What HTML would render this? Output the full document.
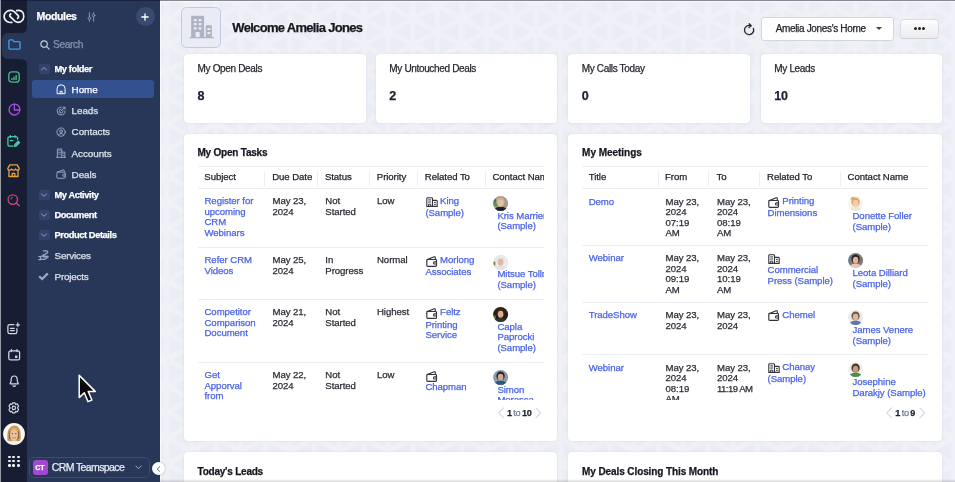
<!DOCTYPE html>
<html><head><meta charset="utf-8"><title>Zoho CRM Home</title>
<style>
*{box-sizing:border-box;margin:0;padding:0}
html,body{width:955px;height:482px;overflow:hidden}
body{font-family:"Liberation Sans",sans-serif;font-size:11px;color:#222;background:#f0f1f7;position:relative}
#railbg{position:absolute;left:0;top:0;width:27px;height:482px;background:#171e34}
#rail{position:absolute;left:0;top:0;width:27px;height:482px;will-change:transform}
#edge{position:absolute;left:0;top:0;width:1px;height:482px;background:#989aa6}
#sidebg{position:absolute;left:27px;top:0;width:133px;height:482px;background:#283757}
#side{position:absolute;left:27px;top:0;width:133px;height:482px;will-change:transform}
#main{position:absolute;left:0;top:0;width:955px;height:482px;overflow:hidden;will-change:transform}
.t{position:absolute;white-space:nowrap;line-height:1;-webkit-text-stroke:0.25px currentColor}
.card{position:absolute;background:#fff;border-radius:4px;box-shadow:0 0 2px rgba(190,195,222,.55)}
.hr{position:absolute;height:1px;background:#eceef5}
.vr{position:absolute;width:1px;background:#edeff6}
.av{position:absolute;width:15px;height:15px;border-radius:50%;overflow:hidden}
svg{position:absolute;overflow:visible}
</style></head><body>
<div id="main">
<svg style="left:161px;top:1px" width="794" height="481"><defs><pattern id="tri" x="276.4" y="4.7" width="49.2" height="26.2" patternUnits="userSpaceOnUse"><rect width="49.2" height="26.2" fill="#ebedf5"/><g stroke="#f0f1f7" stroke-width="5.4" fill="none"><path d="M0 0V26.2M24.6 0V26.2M49.2 0V26.2M0 0L49.2 26.2M0 26.2L49.2 0M0 -26.2L49.2 0M0 26.2L49.2 52.4M0 0L49.2 -26.2M0 52.4L49.2 26.2"/></g></pattern></defs><rect width="794" height="481" fill="url(#tri)"/></svg>
<div style="position:absolute;left:160px;top:0;width:795px;height:1px;background:#86888f"></div><div style="position:absolute;left:160px;top:1px;width:795px;height:1px;background:#f7f8fb"></div>
<div style="position:absolute;left:160px;top:1px;width:1.3px;height:481px;background:#f9fafc"></div>
<div style="position:absolute;left:180.7px;top:6.8px;width:40.8px;height:40.8px;background:#e9ecf4;border:1px solid #c1c8e8;border-radius:5.5px"></div>
<svg style="left:175px;top:2px" width="60" height="50.05" viewBox="0 0 578 482"><g fill="#adb4c2" fill-rule="evenodd">
<path d="M156 140Q156 133 163 133H273Q280 133 280 140V338H238V290H198V338H156Z M182 164V186H208V164Z M228 164V186H254V164Z M182 203V225H208V203Z M228 203V225H254V203Z M182 242V264H208V242Z M228 242V264H254V242Z"/>
<path d="M296 232Q296 225 303 225H348Q355 225 355 232V338H296Z M312 250V270H340V250Z M312 288V308H340V288Z"/>
<rect x="140" y="336" width="236" height="14" rx="4"/></g></svg>
<div class="t" style="left:232.3px;top:21px;font-size:13px;color:#15171f;font-weight:bold;letter-spacing:-0.69px;">Welcome Amelia Jones</div>
<svg style="left:743.2px;top:22.6px" width="12" height="12.6" viewBox="0 0 12 12.6" fill="none" stroke="#23252c" stroke-width="1.3" stroke-linecap="round" stroke-linejoin="round"><path d="M7.4 2.6A4.6 4.6 0 1 0 10.4 5.4"/><path d="M6.2 0.8L8.2 2.7L6 4.5"/></svg>
<div style="position:absolute;left:761px;top:17.2px;width:132.5px;height:23.4px;background:#fff;border:1px solid #d3d6e2;border-radius:3px"></div>
<div class="t" style="left:775.7px;top:24px;font-size:10px;color:#23252c;letter-spacing:-0.34px;">Amelia Jones's Home</div>
<div style="position:absolute;left:875.6px;top:26.9px;width:0;height:0;border-left:3.1px solid transparent;border-right:3.1px solid transparent;border-top:3px solid #444"></div>
<div style="position:absolute;left:900.2px;top:18.5px;width:38.6px;height:20px;background:linear-gradient(#fdfdfe,#eceaef);border:1px solid #d9dbea;border-bottom-color:#cfcfd8;border-radius:4px"></div>
<div style="position:absolute;left:914.1px;top:27.4px;width:3px;height:3px;border-radius:50%;background:#222"></div>
<div style="position:absolute;left:918.15px;top:27.4px;width:3px;height:3px;border-radius:50%;background:#222"></div>
<div style="position:absolute;left:922.2px;top:27.4px;width:3px;height:3px;border-radius:50%;background:#222"></div>
<div class="card" style="left:184.3px;top:54px;width:181.4px;height:68.7px"></div>
<div class="t" style="left:197.6px;top:64px;font-size:10px;color:#26282f;letter-spacing:-0.34px;">My Open Deals</div>
<div class="t" style="left:197.6px;top:90px;font-size:12.5px;color:#1b1f33;font-weight:bold;letter-spacing:-0.2px;">8</div>
<div class="card" style="left:376px;top:54px;width:181.4px;height:68.7px"></div>
<div class="t" style="left:389.3px;top:64px;font-size:10px;color:#26282f;letter-spacing:-0.34px;">My Untouched Deals</div>
<div class="t" style="left:389.3px;top:90px;font-size:12.5px;color:#1b1f33;font-weight:bold;letter-spacing:-0.2px;">2</div>
<div class="card" style="left:568.4px;top:54px;width:181.4px;height:68.7px"></div>
<div class="t" style="left:581.7px;top:64px;font-size:10px;color:#26282f;letter-spacing:-0.34px;">My Calls Today</div>
<div class="t" style="left:581.7px;top:90px;font-size:12.5px;color:#1b1f33;font-weight:bold;letter-spacing:-0.2px;">0</div>
<div class="card" style="left:761px;top:54px;width:181.4px;height:68.7px"></div>
<div class="t" style="left:774.3px;top:64px;font-size:10px;color:#26282f;letter-spacing:-0.34px;">My Leads</div>
<div class="t" style="left:774.3px;top:90px;font-size:12.5px;color:#1b1f33;font-weight:bold;letter-spacing:-0.2px;">10</div>
<div class="card" style="left:184.3px;top:134px;width:373.2px;height:307px"></div>
<div class="card" style="left:568.4px;top:134px;width:373.2px;height:307px"></div>
<div class="card" style="left:184.3px;top:451.5px;width:373.2px;height:60px"></div>
<div class="card" style="left:568.4px;top:451.5px;width:373.2px;height:60px"></div>
<div class="t" style="left:197.5px;top:148px;font-size:10px;color:#15171f;font-weight:bold;letter-spacing:-0.22px;">My Open Tasks</div>
<div class="t" style="left:582.1px;top:148px;font-size:10px;color:#15171f;font-weight:bold;letter-spacing:-0.03px;">My Meetings</div>
<div class="t" style="left:197.5px;top:467px;font-size:10px;color:#15171f;font-weight:bold;letter-spacing:-0.22px;">Today's Leads</div>
<div class="t" style="left:582.1px;top:467px;font-size:10px;color:#15171f;font-weight:bold;letter-spacing:-0.1px;">My Deals Closing This Month</div>
<div style="position:absolute;left:160px;top:479px;width:795px;height:3px;background:linear-gradient(rgba(0,0,0,0),rgba(0,0,0,.16));z-index:5"></div>
<div style="position:absolute;left:197.5px;top:160px;width:346.5px;height:240.3px;overflow:hidden"><div style="position:absolute;left:-197.5px;top:-160px;width:955px;height:482px">
<div class="hr" style="left:197.5px;top:166.1px;width:347px"></div><div class="hr" style="left:197.5px;top:188.1px;width:347px"></div>
<div class="vr" style="left:264.3px;top:170.5px;height:15px"></div>
<div class="vr" style="left:317.2px;top:170.5px;height:15px"></div>
<div class="vr" style="left:369.3px;top:170.5px;height:15px"></div>
<div class="vr" style="left:417.1px;top:170.5px;height:15px"></div>
<div class="vr" style="left:485.1px;top:170.5px;height:15px"></div>
<div class="t" style="left:204.3px;top:172px;font-size:9.6px;color:#23252c;letter-spacing:-0.06px;">Subject</div>
<div class="t" style="left:272.2px;top:172px;font-size:9.6px;color:#23252c;letter-spacing:-0.06px;">Due Date</div>
<div class="t" style="left:324.9px;top:172px;font-size:9.6px;color:#23252c;letter-spacing:-0.06px;">Status</div>
<div class="t" style="left:376.8px;top:172px;font-size:9.6px;color:#23252c;letter-spacing:-0.06px;">Priority</div>
<div class="t" style="left:424.8px;top:172px;font-size:9.6px;color:#23252c;letter-spacing:-0.06px;">Related To</div>
<div class="t" style="left:492.4px;top:172px;font-size:9.6px;color:#23252c;letter-spacing:-0.06px;">Contact Name</div>
<div class="hr" style="left:197.5px;top:246.9px;width:347px"></div>
<div class="hr" style="left:197.5px;top:299.1px;width:347px"></div>
<div class="hr" style="left:197.5px;top:362.0px;width:347px"></div>
<div class="t" style="left:204.5px;top:196px;font-size:9.6px;color:#4a63e6;letter-spacing:-0.06px;">Register for</div>
<div class="t" style="left:204.5px;top:207px;font-size:9.6px;color:#4a63e6;letter-spacing:-0.06px;">upcoming</div>
<div class="t" style="left:204.5px;top:217px;font-size:9.6px;color:#4a63e6;letter-spacing:-0.06px;">CRM</div>
<div class="t" style="left:204.5px;top:228px;font-size:9.6px;color:#4a63e6;letter-spacing:-0.06px;">Webinars</div>
<div class="t" style="left:272.5px;top:196px;font-size:9.6px;color:#2b2d35;letter-spacing:-0.06px;">May 23,</div>
<div class="t" style="left:272.5px;top:207px;font-size:9.6px;color:#2b2d35;letter-spacing:-0.06px;">2024</div>
<div class="t" style="left:325.3px;top:196px;font-size:9.6px;color:#2b2d35;letter-spacing:-0.06px;">Not</div>
<div class="t" style="left:325.3px;top:207px;font-size:9.6px;color:#2b2d35;letter-spacing:-0.06px;">Started</div>
<div class="t" style="left:377.0px;top:196px;font-size:9.6px;color:#2b2d35;letter-spacing:-0.06px;">Low</div>
<svg style="left:425.7px;top:197.0px" width="12" height="10" viewBox="0 0 12 10" fill="none" stroke="#33353d" stroke-width="1.1" stroke-linejoin="round"><path d="M0.8 9.4V1.6Q0.8 0.7 1.7 0.7H5.6Q6.5 0.7 6.5 1.6V9.4Z"/><path d="M6.5 3.4H10.3Q11.2 3.4 11.2 4.3V9.4H6.5"/><path d="M2.2 2.9H5.1M2.2 5H5.1M8 5.4H9.8M8 7.4H9.8" stroke-width="1"/><path d="M2.6 9.4V7.2H4.7V9.4" stroke-width="1"/></svg>
<div class="t" style="left:440.1px;top:196px;font-size:9.6px;color:#4a63e6;letter-spacing:-0.06px;">King</div>
<div class="t" style="left:425.4px;top:208px;font-size:9.6px;color:#4a63e6;letter-spacing:-0.06px;">(Sample)</div>
<svg style="left:492.8px;top:195.8px" width="15.2" height="15.2" viewBox="0 0 16 16"><defs><clipPath id="c492_195"><circle cx="8" cy="8" r="7.9"/></clipPath><filter id="fc492_195" x="-20%" y="-20%" width="140%" height="140%"><feGaussianBlur stdDeviation="0.55"/></filter></defs><g clip-path="url(#c492_195)"><g filter="url(#fc492_195)"><rect x="-2" y="-2" width="20" height="20" fill="#a89a84"/><rect x="0" y="5" width="4.5" height="6" fill="#5f9445"/><rect x="0" y="3" width="3" height="3" fill="#3b5fa8"/><ellipse cx="8" cy="6.4" rx="4.4" ry="4.9" fill="#c9b59c"/><path d="M0.5 17Q1.5 11.4 8 11.4Q14.5 11.4 15.5 17Z" fill="#1c2336"/><ellipse cx="8" cy="7.6" rx="2.9" ry="3.6" fill="#e6bfa8"/></g></g></svg>
<div class="t" style="left:497.4px;top:211px;font-size:9.6px;color:#4a63e6;letter-spacing:-0.06px;">Kris Marrien</div>
<div class="t" style="left:497.4px;top:221px;font-size:9.6px;color:#4a63e6;letter-spacing:-0.06px;">(Sample)</div>
<div class="t" style="left:204.5px;top:255px;font-size:9.6px;color:#4a63e6;letter-spacing:-0.06px;">Refer CRM</div>
<div class="t" style="left:204.5px;top:266px;font-size:9.6px;color:#4a63e6;letter-spacing:-0.06px;">Videos</div>
<div class="t" style="left:272.5px;top:255px;font-size:9.6px;color:#2b2d35;letter-spacing:-0.06px;">May 25,</div>
<div class="t" style="left:272.5px;top:266px;font-size:9.6px;color:#2b2d35;letter-spacing:-0.06px;">2024</div>
<div class="t" style="left:325.3px;top:255px;font-size:9.6px;color:#2b2d35;letter-spacing:-0.06px;">In</div>
<div class="t" style="left:325.3px;top:266px;font-size:9.6px;color:#2b2d35;letter-spacing:-0.06px;">Progress</div>
<div class="t" style="left:377.0px;top:255px;font-size:9.6px;color:#2b2d35;letter-spacing:-0.06px;">Normal</div>
<svg style="left:425.9px;top:255.6px" width="12" height="11" viewBox="0 0 12 11" fill="none" stroke="#33353d" stroke-width="1.15" stroke-linejoin="round" stroke-linecap="round"><path d="M0.8 4.4Q0.8 3.5 1.7 3.5H9.6Q10.5 3.5 10.5 4.4V9.4Q10.5 10.3 9.6 10.3H1.7Q0.8 10.3 0.8 9.4Z"/><path d="M1.2 3.6L8.2 0.8Q9.2 0.5 9.3 1.5V3.4"/><path d="M10.5 5.8H8.4Q7.5 5.8 7.5 6.9Q7.5 8 8.4 8H10.5"/></svg>
<div class="t" style="left:440.1px;top:255px;font-size:9.6px;color:#4a63e6;letter-spacing:-0.06px;">Morlong</div>
<div class="t" style="left:425.4px;top:267px;font-size:9.6px;color:#4a63e6;letter-spacing:-0.06px;">Associates</div>
<svg style="left:492.8px;top:254.6px" width="15.2" height="15.2" viewBox="0 0 16 16"><defs><clipPath id="c492_254"><circle cx="8" cy="8" r="7.9"/></clipPath><filter id="fc492_254" x="-20%" y="-20%" width="140%" height="140%"><feGaussianBlur stdDeviation="0.55"/></filter></defs><g clip-path="url(#c492_254)"><g filter="url(#fc492_254)"><rect x="-2" y="-2" width="20" height="20" fill="#eceeee"/><circle cx="8" cy="8" r="7.6" fill="none" stroke="#d8dbe2" stroke-width="0.8"/><rect x="0.5" y="7" width="2" height="4" fill="#6f8a4a"/><ellipse cx="8" cy="6.4" rx="4.4" ry="4.9" fill="#e6e3de"/><path d="M0.5 17Q1.5 11.4 8 11.4Q14.5 11.4 15.5 17Z" fill="#dfe3e6"/><ellipse cx="8" cy="7.6" rx="2.9" ry="3.6" fill="#e3b89c"/></g></g></svg>
<div class="t" style="left:497.4px;top:269px;font-size:9.6px;color:#4a63e6;letter-spacing:-0.06px;">Mitsue Tollner</div>
<div class="t" style="left:497.4px;top:280px;font-size:9.6px;color:#4a63e6;letter-spacing:-0.06px;">(Sample)</div>
<div class="t" style="left:204.5px;top:307px;font-size:9.6px;color:#4a63e6;letter-spacing:-0.06px;">Competitor</div>
<div class="t" style="left:204.5px;top:318px;font-size:9.6px;color:#4a63e6;letter-spacing:-0.06px;">Comparison</div>
<div class="t" style="left:204.5px;top:328px;font-size:9.6px;color:#4a63e6;letter-spacing:-0.06px;">Document</div>
<div class="t" style="left:272.5px;top:307px;font-size:9.6px;color:#2b2d35;letter-spacing:-0.06px;">May 21,</div>
<div class="t" style="left:272.5px;top:318px;font-size:9.6px;color:#2b2d35;letter-spacing:-0.06px;">2024</div>
<div class="t" style="left:325.3px;top:307px;font-size:9.6px;color:#2b2d35;letter-spacing:-0.06px;">Not</div>
<div class="t" style="left:325.3px;top:318px;font-size:9.6px;color:#2b2d35;letter-spacing:-0.06px;">Started</div>
<div class="t" style="left:377.0px;top:307px;font-size:9.6px;color:#2b2d35;letter-spacing:-0.06px;">Highest</div>
<svg style="left:425.9px;top:307.8px" width="12" height="11" viewBox="0 0 12 11" fill="none" stroke="#33353d" stroke-width="1.15" stroke-linejoin="round" stroke-linecap="round"><path d="M0.8 4.4Q0.8 3.5 1.7 3.5H9.6Q10.5 3.5 10.5 4.4V9.4Q10.5 10.3 9.6 10.3H1.7Q0.8 10.3 0.8 9.4Z"/><path d="M1.2 3.6L8.2 0.8Q9.2 0.5 9.3 1.5V3.4"/><path d="M10.5 5.8H8.4Q7.5 5.8 7.5 6.9Q7.5 8 8.4 8H10.5"/></svg>
<div class="t" style="left:440.1px;top:307px;font-size:9.6px;color:#4a63e6;letter-spacing:-0.06px;">Feltz</div>
<div class="t" style="left:425.4px;top:320px;font-size:9.6px;color:#4a63e6;letter-spacing:-0.06px;">Printing</div>
<div class="t" style="left:425.4px;top:330px;font-size:9.6px;color:#4a63e6;letter-spacing:-0.06px;">Service</div>
<svg style="left:492.8px;top:306.8px" width="15.2" height="15.2" viewBox="0 0 16 16"><defs><clipPath id="c492_306"><circle cx="8" cy="8" r="7.9"/></clipPath><filter id="fc492_306" x="-20%" y="-20%" width="140%" height="140%"><feGaussianBlur stdDeviation="0.55"/></filter></defs><g clip-path="url(#c492_306)"><g filter="url(#fc492_306)"><rect x="-2" y="-2" width="20" height="20" fill="#2b1e18"/><rect x="0" y="9" width="3" height="4" fill="#4a7a3a"/><ellipse cx="8" cy="6.4" rx="4.4" ry="4.9" fill="#3a2519"/><path d="M0.5 17Q1.5 11.4 8 11.4Q14.5 11.4 15.5 17Z" fill="#33302b"/><ellipse cx="8" cy="7.6" rx="2.9" ry="3.6" fill="#dcae92"/></g></g></svg>
<div class="t" style="left:497.4px;top:322px;font-size:9.6px;color:#4a63e6;letter-spacing:-0.06px;">Capla</div>
<div class="t" style="left:497.4px;top:332px;font-size:9.6px;color:#4a63e6;letter-spacing:-0.06px;">Paprocki</div>
<div class="t" style="left:497.4px;top:343px;font-size:9.6px;color:#4a63e6;letter-spacing:-0.06px;">(Sample)</div>
<div class="t" style="left:204.5px;top:370px;font-size:9.6px;color:#4a63e6;letter-spacing:-0.06px;">Get</div>
<div class="t" style="left:204.5px;top:381px;font-size:9.6px;color:#4a63e6;letter-spacing:-0.06px;">Apporval</div>
<div class="t" style="left:204.5px;top:391px;font-size:9.6px;color:#4a63e6;letter-spacing:-0.06px;">from</div>
<div class="t" style="left:204.5px;top:402px;font-size:9.6px;color:#4a63e6;letter-spacing:-0.06px;">Manager</div>
<div class="t" style="left:272.5px;top:370px;font-size:9.6px;color:#2b2d35;letter-spacing:-0.06px;">May 22,</div>
<div class="t" style="left:272.5px;top:381px;font-size:9.6px;color:#2b2d35;letter-spacing:-0.06px;">2024</div>
<div class="t" style="left:325.3px;top:370px;font-size:9.6px;color:#2b2d35;letter-spacing:-0.06px;">Not</div>
<div class="t" style="left:325.3px;top:381px;font-size:9.6px;color:#2b2d35;letter-spacing:-0.06px;">Started</div>
<div class="t" style="left:377.0px;top:370px;font-size:9.6px;color:#2b2d35;letter-spacing:-0.06px;">Low</div>
<svg style="left:425.9px;top:370.7px" width="12" height="11" viewBox="0 0 12 11" fill="none" stroke="#33353d" stroke-width="1.15" stroke-linejoin="round" stroke-linecap="round"><path d="M0.8 4.4Q0.8 3.5 1.7 3.5H9.6Q10.5 3.5 10.5 4.4V9.4Q10.5 10.3 9.6 10.3H1.7Q0.8 10.3 0.8 9.4Z"/><path d="M1.2 3.6L8.2 0.8Q9.2 0.5 9.3 1.5V3.4"/><path d="M10.5 5.8H8.4Q7.5 5.8 7.5 6.9Q7.5 8 8.4 8H10.5"/></svg>
<div class="t" style="left:440.1px;top:370px;font-size:9.6px;color:#4a63e6;letter-spacing:-0.06px;"></div>
<div class="t" style="left:425.4px;top:382px;font-size:9.6px;color:#4a63e6;letter-spacing:-0.06px;">Chapman</div>
<svg style="left:492.8px;top:369.7px" width="15.2" height="15.2" viewBox="0 0 16 16"><defs><clipPath id="c492_369"><circle cx="8" cy="8" r="7.9"/></clipPath><filter id="fc492_369" x="-20%" y="-20%" width="140%" height="140%"><feGaussianBlur stdDeviation="0.55"/></filter></defs><g clip-path="url(#c492_369)"><g filter="url(#fc492_369)"><rect x="-2" y="-2" width="20" height="20" fill="#8b9bb0"/><ellipse cx="8" cy="6.4" rx="4.4" ry="4.9" fill="#2b2727"/><path d="M0.5 17Q1.5 11.4 8 11.4Q14.5 11.4 15.5 17Z" fill="#2a5c7a"/><ellipse cx="8" cy="7.6" rx="2.9" ry="3.6" fill="#d4ab92"/></g></g></svg>
<div class="t" style="left:497.4px;top:385px;font-size:9.6px;color:#4a63e6;letter-spacing:-0.06px;">Simon</div>
<div class="t" style="left:497.4px;top:395px;font-size:9.6px;color:#4a63e6;letter-spacing:-0.06px;">Morasca</div>
<div class="t" style="left:497.4px;top:406px;font-size:9.6px;color:#4a63e6;letter-spacing:-0.06px;">(Sample)</div>
</div></div>
<svg style="left:497.6px;top:406.9px" width="6.4" height="11.6" viewBox="0 0 6.4 11.6" fill="none" stroke="#d2d5e0" stroke-width="1.1"><path d="M5.8 0.5L0.8 5.8L5.8 11.1"/></svg><svg style="left:535.2px;top:406.9px" width="6.4" height="11.6" viewBox="0 0 6.4 11.6" fill="none" stroke="#d2d5e0" stroke-width="1.1"><path d="M0.6 0.5L5.6 5.8L0.6 11.1"/></svg>
<div class="t" style="left:506.9px;top:408.8px;font-size:9.1px;color:#1d2030;letter-spacing:-0.3px;word-spacing:-0.6px"><b>1</b> <span style="color:#6f7d9c">to</span> <b>10</b></div>
<div style="position:absolute;left:582px;top:160px;width:346.5px;height:240.3px;overflow:hidden"><div style="position:absolute;left:-582px;top:-160px;width:955px;height:482px">
<div class="hr" style="left:582px;top:166.1px;width:347px"></div><div class="hr" style="left:582px;top:187.9px;width:347px"></div>
<div class="vr" style="left:657.6px;top:170.5px;height:15px"></div>
<div class="vr" style="left:708.2px;top:170.5px;height:15px"></div>
<div class="vr" style="left:759.3px;top:170.5px;height:15px"></div>
<div class="vr" style="left:840.1px;top:170.5px;height:15px"></div>
<div class="t" style="left:588.7px;top:172px;font-size:9.6px;color:#23252c;letter-spacing:-0.06px;">Title</div>
<div class="t" style="left:665.0px;top:172px;font-size:9.6px;color:#23252c;letter-spacing:-0.06px;">From</div>
<div class="t" style="left:716.5px;top:172px;font-size:9.6px;color:#23252c;letter-spacing:-0.06px;">To</div>
<div class="t" style="left:767.1px;top:172px;font-size:9.6px;color:#23252c;letter-spacing:-0.06px;">Related To</div>
<div class="t" style="left:847.6px;top:172px;font-size:9.6px;color:#23252c;letter-spacing:-0.06px;">Contact Name</div>
<div class="hr" style="left:582px;top:244.7px;width:347px"></div>
<div class="hr" style="left:582px;top:301.7px;width:347px"></div>
<div class="hr" style="left:582px;top:354.0px;width:347px"></div>
<div class="t" style="left:588.7px;top:197px;font-size:9.6px;color:#4a63e6;letter-spacing:-0.06px;">Demo</div>
<div class="t" style="left:665.5px;top:197px;font-size:9.6px;color:#2b2d35;letter-spacing:-0.06px;">May 23,</div>
<div class="t" style="left:665.5px;top:207px;font-size:9.6px;color:#2b2d35;letter-spacing:-0.06px;">2024</div>
<div class="t" style="left:665.5px;top:218px;font-size:9.6px;color:#2b2d35;letter-spacing:-0.06px;">07:19</div>
<div class="t" style="left:665.5px;top:228px;font-size:9.6px;color:#2b2d35;letter-spacing:-0.06px;">AM</div>
<div class="t" style="left:717.0px;top:197px;font-size:9.6px;color:#2b2d35;letter-spacing:-0.06px;">May 23,</div>
<div class="t" style="left:717.0px;top:207px;font-size:9.6px;color:#2b2d35;letter-spacing:-0.06px;">2024</div>
<div class="t" style="left:717.0px;top:218px;font-size:9.6px;color:#2b2d35;letter-spacing:-0.06px;">08:19</div>
<div class="t" style="left:717.0px;top:228px;font-size:9.6px;color:#2b2d35;letter-spacing:-0.06px;">AM</div>
<svg style="left:768.1px;top:196.6px" width="12" height="11" viewBox="0 0 12 11" fill="none" stroke="#33353d" stroke-width="1.15" stroke-linejoin="round" stroke-linecap="round"><path d="M0.8 4.4Q0.8 3.5 1.7 3.5H9.6Q10.5 3.5 10.5 4.4V9.4Q10.5 10.3 9.6 10.3H1.7Q0.8 10.3 0.8 9.4Z"/><path d="M1.2 3.6L8.2 0.8Q9.2 0.5 9.3 1.5V3.4"/><path d="M10.5 5.8H8.4Q7.5 5.8 7.5 6.9Q7.5 8 8.4 8H10.5"/></svg>
<div class="t" style="left:782.3px;top:196px;font-size:9.6px;color:#4a63e6;letter-spacing:-0.06px;">Printing</div>
<div class="t" style="left:767.6px;top:208px;font-size:9.6px;color:#4a63e6;letter-spacing:-0.06px;">Dimensions</div>
<svg style="left:847.9px;top:195.8px" width="15.2" height="15.2" viewBox="0 0 16 16"><defs><clipPath id="c847_195"><circle cx="8" cy="8" r="7.9"/></clipPath><filter id="fc847_195" x="-20%" y="-20%" width="140%" height="140%"><feGaussianBlur stdDeviation="0.55"/></filter></defs><g clip-path="url(#c847_195)"><g filter="url(#fc847_195)"><rect x="-2" y="-2" width="20" height="20" fill="#f6f3ee"/><rect x="3" y="1" width="4" height="3" fill="#e8b04a"/><ellipse cx="8" cy="6.4" rx="4.4" ry="4.9" fill="#e0a366"/><path d="M0.5 17Q1.5 11.4 8 11.4Q14.5 11.4 15.5 17Z" fill="#ece6dc"/><ellipse cx="8" cy="7.6" rx="2.9" ry="3.6" fill="#f0cdb2"/></g></g></svg>
<div class="t" style="left:852.5px;top:211px;font-size:9.6px;color:#4a63e6;letter-spacing:-0.06px;">Donette Foller</div>
<div class="t" style="left:852.5px;top:222px;font-size:9.6px;color:#4a63e6;letter-spacing:-0.06px;">(Sample)</div>
<div class="t" style="left:588.7px;top:253px;font-size:9.6px;color:#4a63e6;letter-spacing:-0.06px;">Webinar</div>
<div class="t" style="left:665.5px;top:253px;font-size:9.6px;color:#2b2d35;letter-spacing:-0.06px;">May 23,</div>
<div class="t" style="left:665.5px;top:264px;font-size:9.6px;color:#2b2d35;letter-spacing:-0.06px;">2024</div>
<div class="t" style="left:665.5px;top:274px;font-size:9.6px;color:#2b2d35;letter-spacing:-0.06px;">09:19</div>
<div class="t" style="left:665.5px;top:285px;font-size:9.6px;color:#2b2d35;letter-spacing:-0.06px;">AM</div>
<div class="t" style="left:717.0px;top:253px;font-size:9.6px;color:#2b2d35;letter-spacing:-0.06px;">May 23,</div>
<div class="t" style="left:717.0px;top:264px;font-size:9.6px;color:#2b2d35;letter-spacing:-0.06px;">2024</div>
<div class="t" style="left:717.0px;top:274px;font-size:9.6px;color:#2b2d35;letter-spacing:-0.06px;">10:19</div>
<div class="t" style="left:717.0px;top:285px;font-size:9.6px;color:#2b2d35;letter-spacing:-0.06px;">AM</div>
<svg style="left:767.9px;top:253.6px" width="12" height="10" viewBox="0 0 12 10" fill="none" stroke="#33353d" stroke-width="1.1" stroke-linejoin="round"><path d="M0.8 9.4V1.6Q0.8 0.7 1.7 0.7H5.6Q6.5 0.7 6.5 1.6V9.4Z"/><path d="M6.5 3.4H10.3Q11.2 3.4 11.2 4.3V9.4H6.5"/><path d="M2.2 2.9H5.1M2.2 5H5.1M8 5.4H9.8M8 7.4H9.8" stroke-width="1"/><path d="M2.6 9.4V7.2H4.7V9.4" stroke-width="1"/></svg>
<div class="t" style="left:767.6px;top:265px;font-size:9.6px;color:#4a63e6;letter-spacing:-0.06px;">Commercial</div>
<div class="t" style="left:767.6px;top:276px;font-size:9.6px;color:#4a63e6;letter-spacing:-0.06px;">Press (Sample)</div>
<svg style="left:847.9px;top:252.6px" width="15.2" height="15.2" viewBox="0 0 16 16"><defs><clipPath id="c847_252"><circle cx="8" cy="8" r="7.9"/></clipPath><filter id="fc847_252" x="-20%" y="-20%" width="140%" height="140%"><feGaussianBlur stdDeviation="0.55"/></filter></defs><g clip-path="url(#c847_252)"><g filter="url(#fc847_252)"><rect x="-2" y="-2" width="20" height="20" fill="#7c7a78"/><rect x="1" y="2" width="3" height="3" fill="#4a78c8"/><ellipse cx="8" cy="6.4" rx="4.4" ry="4.9" fill="#2a2220"/><path d="M0.5 17Q1.5 11.4 8 11.4Q14.5 11.4 15.5 17Z" fill="#e0cbb8"/><ellipse cx="8" cy="7.6" rx="2.9" ry="3.6" fill="#e3b297"/></g></g></svg>
<div class="t" style="left:852.5px;top:268px;font-size:9.6px;color:#4a63e6;letter-spacing:-0.06px;">Leota Dilliard</div>
<div class="t" style="left:852.5px;top:279px;font-size:9.6px;color:#4a63e6;letter-spacing:-0.06px;">(Sample)</div>
<div class="t" style="left:588.7px;top:310px;font-size:9.6px;color:#4a63e6;letter-spacing:-0.06px;">TradeShow</div>
<div class="t" style="left:665.5px;top:310px;font-size:9.6px;color:#2b2d35;letter-spacing:-0.06px;">May 23,</div>
<div class="t" style="left:665.5px;top:321px;font-size:9.6px;color:#2b2d35;letter-spacing:-0.06px;">2024</div>
<div class="t" style="left:717.0px;top:310px;font-size:9.6px;color:#2b2d35;letter-spacing:-0.06px;">May 23,</div>
<div class="t" style="left:717.0px;top:321px;font-size:9.6px;color:#2b2d35;letter-spacing:-0.06px;">2024</div>
<svg style="left:768.1px;top:310.4px" width="12" height="11" viewBox="0 0 12 11" fill="none" stroke="#33353d" stroke-width="1.15" stroke-linejoin="round" stroke-linecap="round"><path d="M0.8 4.4Q0.8 3.5 1.7 3.5H9.6Q10.5 3.5 10.5 4.4V9.4Q10.5 10.3 9.6 10.3H1.7Q0.8 10.3 0.8 9.4Z"/><path d="M1.2 3.6L8.2 0.8Q9.2 0.5 9.3 1.5V3.4"/><path d="M10.5 5.8H8.4Q7.5 5.8 7.5 6.9Q7.5 8 8.4 8H10.5"/></svg>
<div class="t" style="left:782.3px;top:310px;font-size:9.6px;color:#4a63e6;letter-spacing:-0.06px;">Chemel</div>
<svg style="left:847.9px;top:309.6px" width="15.2" height="15.2" viewBox="0 0 16 16"><defs><clipPath id="c847_309"><circle cx="8" cy="8" r="7.9"/></clipPath><filter id="fc847_309" x="-20%" y="-20%" width="140%" height="140%"><feGaussianBlur stdDeviation="0.55"/></filter></defs><g clip-path="url(#c847_309)"><g filter="url(#fc847_309)"><rect x="-2" y="-2" width="20" height="20" fill="#eceae6"/><ellipse cx="8" cy="6.4" rx="4.4" ry="4.9" fill="#6d5a48"/><path d="M0.5 17Q1.5 11.4 8 11.4Q14.5 11.4 15.5 17Z" fill="#5a78b0"/><ellipse cx="8" cy="7.6" rx="2.9" ry="3.6" fill="#ddb69c"/></g></g></svg>
<div class="t" style="left:852.5px;top:325px;font-size:9.6px;color:#4a63e6;letter-spacing:-0.06px;">James Venere</div>
<div class="t" style="left:852.5px;top:336px;font-size:9.6px;color:#4a63e6;letter-spacing:-0.06px;">(Sample)</div>
<div class="t" style="left:588.7px;top:363px;font-size:9.6px;color:#4a63e6;letter-spacing:-0.06px;">Webinar</div>
<div class="t" style="left:665.5px;top:363px;font-size:9.6px;color:#2b2d35;letter-spacing:-0.06px;">May 23,</div>
<div class="t" style="left:665.5px;top:373px;font-size:9.6px;color:#2b2d35;letter-spacing:-0.06px;">2024</div>
<div class="t" style="left:665.5px;top:384px;font-size:9.6px;color:#2b2d35;letter-spacing:-0.06px;">08:19</div>
<div class="t" style="left:665.5px;top:394px;font-size:9.6px;color:#2b2d35;letter-spacing:-0.06px;">AM</div>
<div class="t" style="left:717.0px;top:363px;font-size:9.6px;color:#2b2d35;letter-spacing:-0.06px;">May 23,</div>
<div class="t" style="left:717.0px;top:373px;font-size:9.6px;color:#2b2d35;letter-spacing:-0.06px;">2024</div>
<div class="t" style="left:717.0px;top:384px;font-size:9.6px;color:#2b2d35;letter-spacing:-0.06px;"><span style="letter-spacing:-0.55px">11:19 AM</span></div>
<svg style="left:767.9px;top:362.9px" width="12" height="10" viewBox="0 0 12 10" fill="none" stroke="#33353d" stroke-width="1.1" stroke-linejoin="round"><path d="M0.8 9.4V1.6Q0.8 0.7 1.7 0.7H5.6Q6.5 0.7 6.5 1.6V9.4Z"/><path d="M6.5 3.4H10.3Q11.2 3.4 11.2 4.3V9.4H6.5"/><path d="M2.2 2.9H5.1M2.2 5H5.1M8 5.4H9.8M8 7.4H9.8" stroke-width="1"/><path d="M2.6 9.4V7.2H4.7V9.4" stroke-width="1"/></svg>
<div class="t" style="left:782.3px;top:362px;font-size:9.6px;color:#4a63e6;letter-spacing:-0.06px;">Chanay</div>
<div class="t" style="left:767.6px;top:374px;font-size:9.6px;color:#4a63e6;letter-spacing:-0.06px;">(Sample)</div>
<svg style="left:847.9px;top:361.9px" width="15.2" height="15.2" viewBox="0 0 16 16"><defs><clipPath id="c847_361"><circle cx="8" cy="8" r="7.9"/></clipPath><filter id="fc847_361" x="-20%" y="-20%" width="140%" height="140%"><feGaussianBlur stdDeviation="0.55"/></filter></defs><g clip-path="url(#c847_361)"><g filter="url(#fc847_361)"><rect x="-2" y="-2" width="20" height="20" fill="#f0f1ee"/><ellipse cx="8" cy="6.4" rx="4.4" ry="4.9" fill="#43352b"/><path d="M0.5 17Q1.5 11.4 8 11.4Q14.5 11.4 15.5 17Z" fill="#4a8e4a"/><ellipse cx="8" cy="7.6" rx="2.9" ry="3.6" fill="#cb9a78"/></g></g></svg>
<div class="t" style="left:852.5px;top:377px;font-size:9.6px;color:#4a63e6;letter-spacing:-0.06px;">Josephine</div>
<div class="t" style="left:852.5px;top:388px;font-size:9.6px;color:#4a63e6;letter-spacing:-0.06px;">Darakjy (Sample)</div>
</div></div>
<svg style="left:886.2px;top:406.9px" width="6.4" height="11.6" viewBox="0 0 6.4 11.6" fill="none" stroke="#d2d5e0" stroke-width="1.1"><path d="M5.8 0.5L0.8 5.8L5.8 11.1"/></svg><svg style="left:919.3px;top:406.9px" width="6.4" height="11.6" viewBox="0 0 6.4 11.6" fill="none" stroke="#d2d5e0" stroke-width="1.1"><path d="M0.6 0.5L5.6 5.8L0.6 11.1"/></svg>
<div class="t" style="left:895.3px;top:408.8px;font-size:9.1px;color:#1d2030;letter-spacing:-0.3px;word-spacing:-0.6px"><b>1</b> <span style="color:#6f7d9c">to</span> <b>9</b></div>

</div>
<div id="sidebg"></div><div id="railbg"></div>
<div id="side">
<div style="position:absolute;left:0;top:0;width:133px;height:1px;background:#1a2440"></div>
<div class="t" style="left:9.6px;top:11px;font-size:10.5px;color:#ffffff;font-weight:bold;letter-spacing:-0.37px;">Modules</div>
<svg style="left:60px;top:12px" width="9" height="10" viewBox="0 0 9 10" fill="none" stroke="#8794b5" stroke-width="1" stroke-linecap="round"><path d="M2.4 0.6V9.4M6.6 0.6V9.4"/><circle cx="2.4" cy="6.3" r="1.3" fill="#283757"/><circle cx="6.6" cy="3.4" r="1.3" fill="#283757"/></svg>
<div style="position:absolute;left:108.5px;top:7px;width:19px;height:19px;border-radius:50%;background:#3b4a70"></div>
<svg style="left:114px;top:12.5px" width="8" height="8" viewBox="0 0 8 8" stroke="#fff" stroke-width="1.3" stroke-linecap="round"><path d="M4 0.8V7.2M0.8 4H7.2"/></svg>
<svg style="left:12.5px;top:39.5px" width="10" height="10" viewBox="0 0 10 10" fill="none" stroke="#c3cadb" stroke-width="1.2" stroke-linecap="round"><circle cx="4.1" cy="4.1" r="3.2"/><path d="M6.5 6.5L9.2 9.2"/></svg>
<div class="t" style="left:26.0px;top:40px;font-size:10.2px;color:#8692ae;letter-spacing:-0.35px;">Search</div>
<div style="position:absolute;left:11.600000000000001px;top:64.0px;width:11px;height:10px;border-radius:2px;background:#33436b"></div><svg style="left:12.100000000000001px;top:64.0px" width="10" height="10" viewBox="0 0 10 10" fill="none" stroke="#8c98b8" stroke-width="1" stroke-linecap="round" stroke-linejoin="round"><path d="M2.4 5.9L5 3.6L7.6 5.9"/></svg>
<div class="t" style="left:27.5px;top:65px;font-size:9.3px;color:#ffffff;font-weight:bold;letter-spacing:-0.42px;">My folder</div>
<div style="position:absolute;left:11.600000000000001px;top:190.4px;width:11px;height:10px;border-radius:2px;background:#33436b"></div><svg style="left:12.100000000000001px;top:190.4px" width="10" height="10" viewBox="0 0 10 10" fill="none" stroke="#8c98b8" stroke-width="1" stroke-linecap="round" stroke-linejoin="round"><path d="M2.4 4L5 6.3L7.6 4"/></svg>
<div class="t" style="left:27.5px;top:191px;font-size:9.3px;color:#ffffff;font-weight:bold;letter-spacing:-0.42px;">My Activity</div>
<div style="position:absolute;left:11.600000000000001px;top:210.1px;width:11px;height:10px;border-radius:2px;background:#33436b"></div><svg style="left:12.100000000000001px;top:210.1px" width="10" height="10" viewBox="0 0 10 10" fill="none" stroke="#8c98b8" stroke-width="1" stroke-linecap="round" stroke-linejoin="round"><path d="M2.4 4L5 6.3L7.6 4"/></svg>
<div class="t" style="left:27.5px;top:211px;font-size:9.3px;color:#ffffff;font-weight:bold;letter-spacing:-0.42px;">Document</div>
<div style="position:absolute;left:11.600000000000001px;top:230.1px;width:11px;height:10px;border-radius:2px;background:#33436b"></div><svg style="left:12.100000000000001px;top:230.1px" width="10" height="10" viewBox="0 0 10 10" fill="none" stroke="#8c98b8" stroke-width="1" stroke-linecap="round" stroke-linejoin="round"><path d="M2.4 4L5 6.3L7.6 4"/></svg>
<div class="t" style="left:27.5px;top:231px;font-size:9.3px;color:#ffffff;font-weight:bold;letter-spacing:-0.42px;">Product Details</div>
<div style="position:absolute;left:5px;top:80.1px;width:122.1px;height:18.4px;border-radius:3px;background:#33508f"></div>
<svg style="left:28.700000000000003px;top:84.0px" width="10.2" height="10.2" viewBox="0 0 12 12" fill="none" stroke="#ffffff" stroke-width="1.15" stroke-linecap="round" stroke-linejoin="round"><path d="M1.3 11V5.4Q1.3 0.9 6 0.9Q10.7 0.9 10.7 5.4V11Z"/><path d="M4.8 11V8.6H7.2V11"/></svg>
<div class="t" style="left:44.6px;top:85px;font-size:9.9px;color:#ffffff;letter-spacing:-0.08px;">Home</div>
<svg style="left:28.700000000000003px;top:105.5px" width="10.2" height="10.2" viewBox="0 0 12 12" fill="none" stroke="#9ba6c1" stroke-width="1.15" stroke-linecap="round" stroke-linejoin="round"><path d="M10.6 6A4.6 4.6 0 1 1 6 1.4"/><path d="M8.3 6A2.3 2.3 0 1 1 6 3.7"/><path d="M6 6L10.4 1.6M8.2 1.4H10.6V3.8"/></svg>
<div class="t" style="left:44.6px;top:106px;font-size:9.9px;color:#dce1ec;letter-spacing:-0.08px;">Leads</div>
<svg style="left:28.700000000000003px;top:126.9px" width="10.2" height="10.2" viewBox="0 0 12 12" fill="none" stroke="#9ba6c1" stroke-width="1.15" stroke-linecap="round" stroke-linejoin="round"><circle cx="6" cy="6" r="4.9"/><circle cx="6" cy="4.9" r="1.6"/><path d="M3.1 9.4Q3.6 7.6 6 7.6Q8.4 7.6 8.9 9.4"/></svg>
<div class="t" style="left:44.6px;top:127px;font-size:9.9px;color:#dce1ec;letter-spacing:-0.08px;">Contacts</div>
<svg style="left:28.700000000000003px;top:148.3px" width="10.2" height="10.2" viewBox="0 0 12 12" fill="none" stroke="#9ba6c1" stroke-width="1.15" stroke-linecap="round" stroke-linejoin="round"><path d="M1.6 11V1.2H6.8V11M6.8 4.8H10.4V11M0.6 11H11.4"/><path d="M3.2 3.2H5.2M3.2 5.2H5.2M3.2 7.2H5.2M8.2 6.8H9M8.2 8.8H9" stroke-width="0.9"/></svg>
<div class="t" style="left:44.6px;top:149px;font-size:9.9px;color:#dce1ec;letter-spacing:-0.08px;">Accounts</div>
<svg style="left:28.700000000000003px;top:169.4px" width="10.2" height="10.2" viewBox="0 0 12 12" fill="none" stroke="#9ba6c1" stroke-width="1.15" stroke-linecap="round" stroke-linejoin="round"><path d="M1 4.6Q1 3.7 1.9 3.7H10Q10.9 3.7 10.9 4.6V10Q10.9 10.9 10 10.9H1.9Q1 10.9 1 10Z"/><path d="M1.6 3.7L8.6 1Q9.6 0.8 9.7 1.8V3.6"/><path d="M10.9 6.2H8.6Q7.8 6.2 7.8 7.3Q7.8 8.4 8.6 8.4H10.9"/></svg>
<div class="t" style="left:44.6px;top:170px;font-size:9.9px;color:#dce1ec;letter-spacing:-0.08px;">Deals</div>
<svg style="left:11.200000000000003px;top:250px" width="10.8" height="10.4" viewBox="0 0 10.8 10.4" fill="none" stroke="#9ba6c1" stroke-width="1.25" stroke-linecap="round" stroke-linejoin="round"><path d="M5.4 0.9H8.4Q9.8 0.9 9.8 2.2Q9.8 3.4 8.4 3.4H7.4Q7.4 5 5.8 5H5"/><path d="M0.8 6.6H2.6Q3.4 5.8 4.6 5.8H6.6Q7.6 5.9 7.2 7H5.2M7.2 7L9.2 6.2Q10.4 6 10 7.1L6.6 9.4H2.6M0.8 9.6H2.6V6.6" /></svg>
<div class="t" style="left:27.5px;top:251px;font-size:9.9px;color:#dce1ec;letter-spacing:-0.2px;">Services</div>
<svg style="left:11px;top:272.2px" width="11" height="9" viewBox="0 0 11 9" fill="none" stroke="#9ba6c1" stroke-width="2.3" stroke-linejoin="miter"><path d="M1.2 4.4L4.2 7L9.8 1.4"/></svg>
<div class="t" style="left:27.5px;top:272px;font-size:9.9px;color:#dce1ec;letter-spacing:-0.2px;">Projects</div>
<div style="position:absolute;left:2.3999999999999986px;top:456.5px;width:120.6px;height:21.2px;border:1px solid #3c4b73;border-radius:5px"></div>
<div style="position:absolute;left:5.600000000000001px;top:459.8px;width:15.4px;height:15.4px;border-radius:3px;background:#a348d2"></div>
<div class="t" style="left:8.3px;top:464px;font-size:7px;color:#ffffff;font-weight:bold;letter-spacing:-0.1px;">CT</div>
<div class="t" style="left:24.7px;top:462px;font-size:10.5px;color:#e8ecf5;letter-spacing:-0.6px;">CRM Teamspace</div>
<svg style="left:107.6px;top:464.5px" width="7" height="5" viewBox="0 0 7 5" fill="none" stroke="#9aa5c0" stroke-width="1" stroke-linecap="round" stroke-linejoin="round"><path d="M0.8 0.9L3.5 3.8L6.2 0.9"/></svg>
<div style="position:absolute;left:124.80000000000001px;top:462.2px;width:13px;height:13px;border-radius:50%;background:#fff;box-shadow:0 0 2px rgba(0,0,0,.35)"></div>
<svg style="left:128.6px;top:465.7px" width="5" height="6" viewBox="0 0 5 6" fill="none" stroke="#5b6378" stroke-width="1" stroke-linecap="round" stroke-linejoin="round"><path d="M3.6 0.7L1.2 3L3.6 5.3"/></svg>
<svg style="left:51px;top:373.8px" width="19" height="30" viewBox="0 0 19 30"><path d="M1.2 1.4V23.6L6.3 18.8L10 27.6L13.9 26L10.2 17.4H17.2Z" fill="#0a0a0a" stroke="#fff" stroke-width="1.5" stroke-linejoin="round"/></svg>

</div>
<div id="rail"><div id="edge"></div>
<div style="position:absolute;left:1px;top:0;width:26px;height:1px;background:#10152a"></div>
<div style="position:absolute;left:2.3px;top:32.5px;width:24.7px;height:26.5px;background:#283757;border-radius:6px 0 0 6px"></div>
<svg style="left:21px;top:26.5px" width="6" height="6" viewBox="0 0 6 6"><path d="M6 0V6H0Q6 6 6 0Z" fill="#283757"/></svg>
<svg style="left:21px;top:59px" width="6" height="6" viewBox="0 0 6 6"><path d="M6 6V0H0Q6 0 6 6Z" fill="#283757"/></svg>
<svg style="left:0px;top:4px" width="30" height="24.02" viewBox="0 0 602 482" fill="none" stroke="#f1f2f5" stroke-width="33" stroke-linecap="round" stroke-linejoin="round"><path d="M238 368Q190 378 140 350Q82 312 82 250Q82 185 140 148Q215 108 285 152L362 228Q388 262 352 290"/><path d="M335 132Q392 118 440 150Q478 185 478 250Q478 312 425 350Q355 388 300 345L205 255Q180 225 215 200"/></svg>
<svg style="left:8px;top:39.4px" width="13" height="11" viewBox="0 0 13 11" fill="none" stroke="#3f9af0" stroke-width="1.4" stroke-linejoin="round"><path d="M0.9 2.2Q0.9 0.9 2.2 0.9H4.6L6 2.6H10.8Q12.1 2.6 12.1 3.9V8.8Q12.1 10.1 10.8 10.1H2.2Q0.9 10.1 0.9 8.8Z"/></svg>
<svg style="left:7.6px;top:71.4px" width="12" height="12" viewBox="0 0 12 12" fill="none" stroke="#4cba8b" stroke-width="1.3" stroke-linecap="round"><rect x="0.8" y="0.8" width="10.4" height="10.4" rx="3"/><path d="M3.9 8.6V7.6M6 8.6V6.2M8.1 8.6V4.4" stroke-width="1.4"/></svg>
<svg style="left:7.6px;top:102.8px" width="13" height="13" viewBox="0 0 13 13" fill="none" stroke="#a44fe2" stroke-width="1.3" stroke-linecap="round" stroke-linejoin="round"><path d="M6.3 1.2A5.4 5.4 0 1 0 11.8 7.2"/><path d="M6.3 1.2V7H11.9Q11.9 1.6 6.3 1.2Z"/></svg>
<svg style="left:7.2px;top:135px" width="13.5" height="12.5" viewBox="0 0 13.5 12.5" fill="none" stroke="#4acba2" stroke-width="1.3" stroke-linecap="round" stroke-linejoin="round"><path d="M6 11.2H3Q0.9 11.2 0.9 9.2V3.6Q0.9 1.7 3 1.7H8.6Q10.6 1.7 10.6 3.6V4.6"/><path d="M3.4 0.7V2.6M8 0.7V2.6M3.2 5.6H6"/><path d="M7.6 11.4L8 9.4L11.2 6.2L12.6 7.6L9.4 10.8Z" fill="#4acba2"/></svg>
<svg style="left:7.4px;top:163.8px" width="13" height="13.4" viewBox="0 0 13 13.4" fill="none" stroke="#e9a23f" stroke-width="1.3" stroke-linecap="round" stroke-linejoin="round"><path d="M2.8 0.9H10.2L12.2 4.4Q12.2 6.2 10.4 6.2Q8.9 6.2 8.4 5Q7.8 6.2 6.5 6.2Q5.2 6.2 4.6 5Q4.1 6.2 2.6 6.2Q0.8 6.2 0.8 4.4Z"/><path d="M2 6.6V12.5H11V6.6"/><path d="M5.2 12.4V9.4H7.8V12.4"/></svg>
<svg style="left:7.4px;top:193.6px" width="13" height="12.5" viewBox="0 0 13 12.5" fill="none" stroke="#d2457f" stroke-width="1.3" stroke-linecap="round"><circle cx="5.8" cy="5.6" r="4.7"/><path d="M9.4 9.2L12.2 11.8"/><path d="M3.8 5.2Q4 3.6 5.6 3.4" stroke-width="1"/></svg>
<svg style="left:7.2px;top:322px" width="13.5" height="12.5" viewBox="0 0 13.5 12.5" fill="none" stroke="#d4d8e2" stroke-width="1.25" stroke-linecap="round" stroke-linejoin="round"><path d="M6.8 2.6H2.6Q0.9 2.6 0.9 4.3V9.9Q0.9 11.6 2.6 11.6H8.2Q9.9 11.6 9.9 9.9V6.6"/><path d="M3.4 6.3H7.2M3.4 8.6H7.2"/><path d="M10.8 0.6L11.4 2.3L13.1 2.9L11.4 3.5L10.8 5.2L10.2 3.5L8.5 2.9L10.2 2.3Z" fill="#d4d8e2" stroke-width="0.4"/></svg>
<svg style="left:7.5px;top:348.6px" width="12.4" height="11.8" viewBox="0 0 12.4 11.8" fill="none" stroke="#d4d8e2" stroke-width="1.25" stroke-linecap="round" stroke-linejoin="round"><rect x="0.8" y="1.8" width="10.8" height="9.2" rx="1.8"/><path d="M3.4 0.7V2.6M9 0.7V2.6"/><rect x="7" y="6.6" width="2.4" height="2.4" fill="#d4d8e2" stroke="none"/></svg>
<svg style="left:9px;top:375px" width="10.4" height="12.4" viewBox="0 0 10.4 12.4" fill="none" stroke="#d4d8e2" stroke-width="1.2" stroke-linecap="round" stroke-linejoin="round"><path d="M1.6 8.8Q0.6 8.8 1.4 7.8Q2.2 6.8 2.2 4.6Q2.2 1 5.2 1Q8.2 1 8.2 4.6Q8.2 6.8 9 7.8Q9.8 8.8 8.8 8.8Z"/><path d="M3.9 10.8Q5.2 11.8 6.5 10.8"/></svg>
<svg style="left:8.2px;top:402px" width="11.6" height="11.8" viewBox="0 0 11.6 11.8" fill="none" stroke="#d4d8e2" stroke-width="1.15" stroke-linejoin="round"><path d="M4.6 0.9H7L7.6 2.4L9.2 1.9L10.6 4L9.5 5.9L10.6 7.8L9.2 9.9L7.6 9.4L7 10.9H4.6L4 9.4L2.4 9.9L1 7.8L2.1 5.9L1 4L2.4 1.9L4 2.4Z"/><circle cx="5.8" cy="5.9" r="1.7"/></svg>
<svg style="left:2.7px;top:423.3px" width="22" height="22" viewBox="0 0 22 22"><defs><clipPath id="ua"><circle cx="11" cy="11" r="10"/></clipPath><filter id="ub" x="-20%" y="-20%" width="140%" height="140%"><feGaussianBlur stdDeviation="0.5"/></filter></defs><circle cx="11" cy="11" r="10.9" fill="#fbfaf8"/><g clip-path="url(#ua)"><g filter="url(#ub)"><rect width="22" height="22" fill="#faf8f5"/><path d="M4.6 17.5Q3.6 9 6.2 5.4Q8.4 2.4 11.2 2.5Q14.6 2.6 16.2 5.6Q18.4 9.4 17.4 17.5Q14 19 11 18.6Q8 19 4.6 17.5Z" fill="#c79a55"/><path d="M6.3 15.8Q5.6 10 7 7.4L8 8.2V15.4Z M15.7 15.8Q16.4 10 15 7.4L14 8.2V15.4Z" fill="#7a5a30"/><path d="M5 22Q5.6 17.6 11 17.4Q16.4 17.6 17 22Z" fill="#f3efe9"/><ellipse cx="11" cy="11.6" rx="4.1" ry="6.2" fill="#ebbf9f"/><path d="M7 8.6Q7.6 4.6 11 4.6Q14.6 4.8 15.1 8.8Q12.6 7.6 11.2 5.9Q9.6 7.8 7 8.6Z" fill="#d6ab68"/><circle cx="9.3" cy="10.6" r="0.65" fill="#5a4030"/><circle cx="12.8" cy="10.6" r="0.65" fill="#5a4030"/><path d="M9.2 14.4Q11 15.8 12.9 14.4Q11 15 9.2 14.4Z" fill="#fff" stroke="#c07a68" stroke-width="0.5"/></g></g></svg>
<div style="position:absolute;left:8.00px;top:455.60px;width:2.7px;height:2.7px;border-radius:50%;background:#f2f3f6"></div><div style="position:absolute;left:12.45px;top:455.60px;width:2.7px;height:2.7px;border-radius:50%;background:#f2f3f6"></div><div style="position:absolute;left:16.90px;top:455.60px;width:2.7px;height:2.7px;border-radius:50%;background:#f2f3f6"></div><div style="position:absolute;left:8.00px;top:459.80px;width:2.7px;height:2.7px;border-radius:50%;background:#f2f3f6"></div><div style="position:absolute;left:12.45px;top:459.80px;width:2.7px;height:2.7px;border-radius:50%;background:#f2f3f6"></div><div style="position:absolute;left:16.90px;top:459.80px;width:2.7px;height:2.7px;border-radius:50%;background:#f2f3f6"></div><div style="position:absolute;left:8.00px;top:464.00px;width:2.7px;height:2.7px;border-radius:50%;background:#f2f3f6"></div><div style="position:absolute;left:12.45px;top:464.00px;width:2.7px;height:2.7px;border-radius:50%;background:#f2f3f6"></div><div style="position:absolute;left:16.90px;top:464.00px;width:2.7px;height:2.7px;border-radius:50%;background:#f2f3f6"></div>

</div>
</body></html>
